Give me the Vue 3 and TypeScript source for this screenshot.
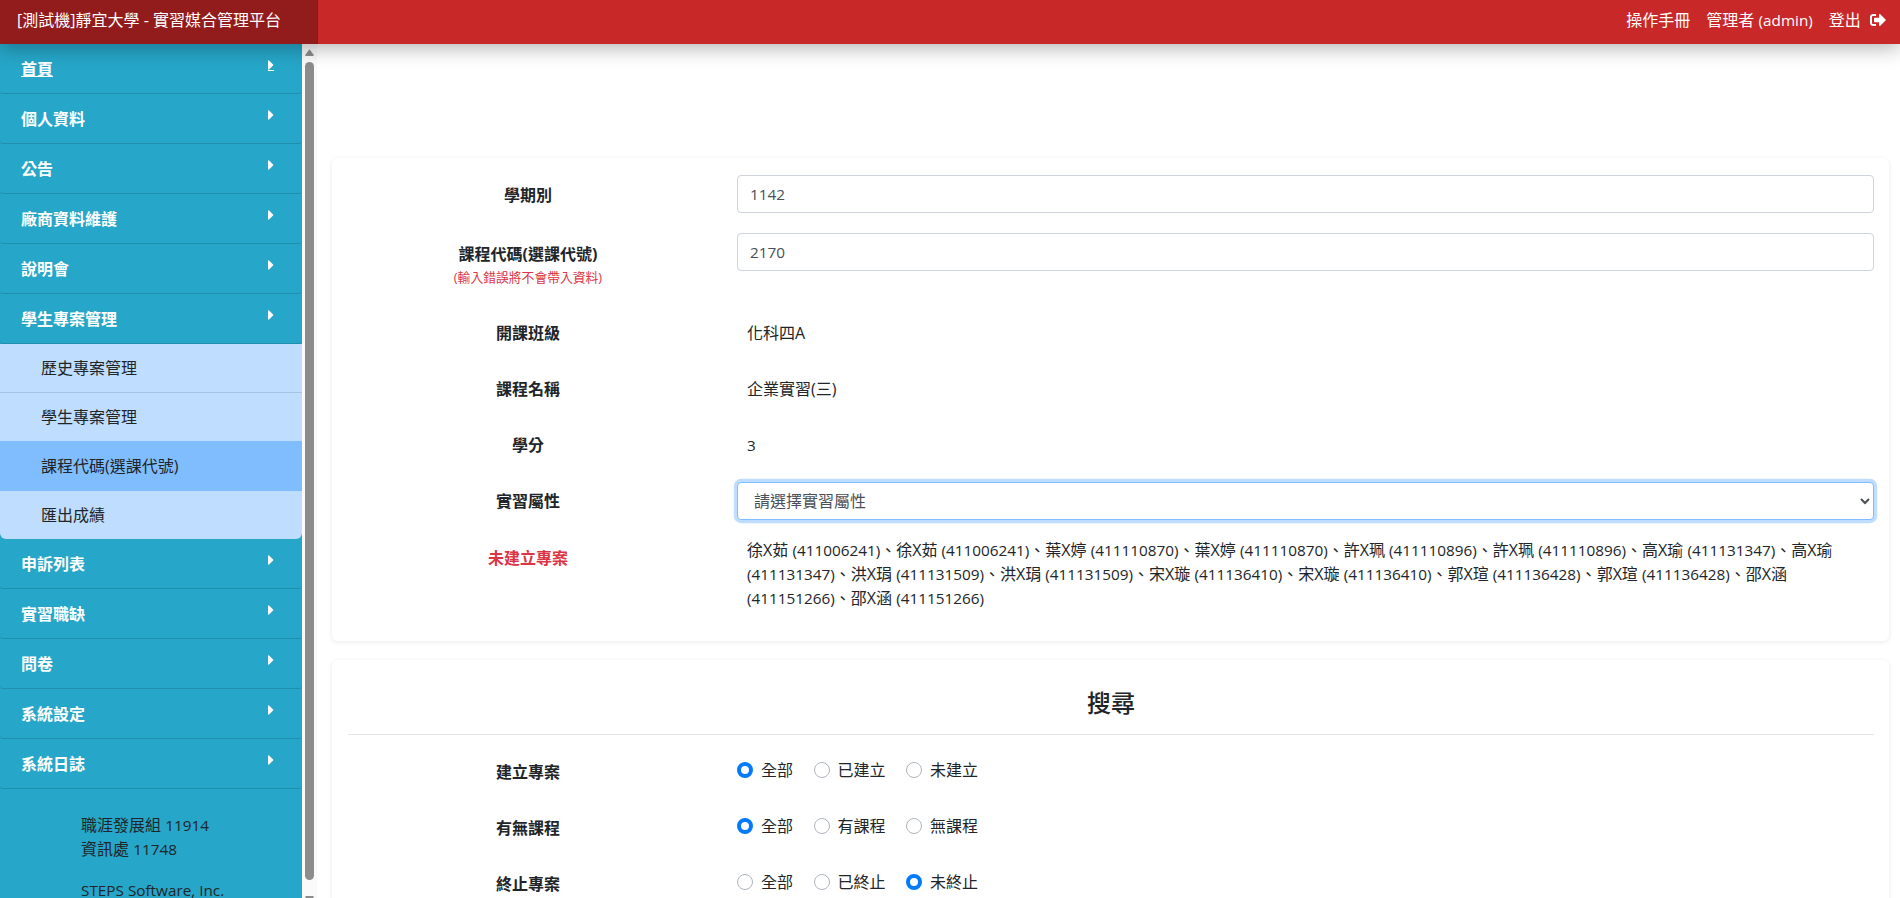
<script setup lang="ts">
import { ref } from "vue";

interface MenuItem {
  label: string;
  children?: string[];
}

interface Student {
  name: string;
  id: string;
}

interface RadioGroup {
  label: string;
  name: string;
  options: string[];
  value: string;
}

const menu: MenuItem[] = [
  { label: "首頁" },
  { label: "個人資料" },
  { label: "公告" },
  { label: "廠商資料維護" },
  { label: "說明會" },
  {
    label: "學生專案管理",
    children: ["歷史專案管理", "學生專案管理", "課程代碼(選課代號)", "匯出成績"],
  },
  { label: "申訴列表" },
  { label: "實習職缺" },
  { label: "問卷" },
  { label: "系統設定" },
  { label: "系統日誌" },
];

const activeChild = "課程代碼(選課代號)";

const baseStudents: Student[] = [
  { name: "徐X茹", id: "411006241" },
  { name: "葉X婷", id: "411110870" },
  { name: "許X珮", id: "411110896" },
  { name: "高X瑜", id: "411131347" },
  { name: "洪X琄", id: "411131509" },
  { name: "宋X璇", id: "411136410" },
  { name: "郭X瑄", id: "411136428" },
  { name: "邵X涵", id: "411151266" },
];
// 每位學生在資料裡都出現兩次
const students = baseStudents.flatMap((s) => [s, s]);

const term = ref("1142");
const courseCode = ref("2170");
const internType = ref("");

const radioGroups = ref<RadioGroup[]>([
  { label: "建立專案", name: "created", options: ["全部", "已建立", "未建立"], value: "全部" },
  { label: "有無課程", name: "course", options: ["全部", "有課程", "無課程"], value: "全部" },
  { label: "終止專案", name: "ended", options: ["全部", "已終止", "未終止"], value: "未終止" },
]);
</script>

<template>
  <div class="layout">
    <header class="topbar">
      <div class="brand">[測試機]靜宜大學 - 實習媒合管理平台</div>
      <nav class="top-links">
        <a>操作手冊</a>
        <a>管理者 <span class="num">(admin)</span></a>
        <a class="logout">
          登出
          <svg class="logout-icon" viewBox="0 0 512 512" aria-hidden="true">
            <path
              fill="currentColor"
              d="M497 273L329 441c-15 15-41 4.5-41-17v-96H152c-13.3 0-24-10.7-24-24v-96c0-13.3 10.7-24 24-24h136V88c0-21.4 25.9-32 41-17l168 168c9.3 9.4 9.3 24.6 0 34zM192 436v-40c0-6.6-5.4-12-12-12H96c-17.7 0-32-14.3-32-32V160c0-17.7 14.3-32 32-32h84c6.6 0 12-5.4 12-12V76c0-6.6-5.4-12-12-12H96c-53 0-96 43-96 96v192c0 53 43 96 96 96h84c6.6 0 12-5.4 12-12z"
            />
          </svg>
        </a>
      </nav>
    </header>

    <div class="body">
      <aside class="sidebar">
        <div class="side-scroll">
          <ul class="menu">
            <li v-for="(item, idx) in menu" :key="item.label">
              <a class="menu-item" :class="{ hovered: idx === 0 }">
                <span class="menu-label">{{ item.label }}</span>
                <span class="caret">
                  <svg viewBox="0 0 192 512" aria-hidden="true">
                    <path
                      fill="currentColor"
                      d="M0 384.662V127.338c0-17.818 21.543-26.741 34.142-14.142l128.662 128.662c7.81 7.81 7.81 20.474 0 28.284L34.142 398.804C21.543 411.404 0 402.48 0 384.662z"
                    />
                  </svg>
                </span>
              </a>
              <ul v-if="item.children" class="submenu">
                <li
                  v-for="child in item.children"
                  :key="child"
                  class="sub-item"
                  :class="{ active: child === activeChild }"
                >
                  {{ child }}
                </li>
              </ul>
            </li>
          </ul>
          <div class="side-footer">
            <p>職涯發展組 <span class="num">11914</span><br />資訊處 <span class="num">11748</span></p>
            <p class="num">STEPS Software, Inc.</p>
          </div>
        </div>
        <div class="scrollbar" aria-hidden="true">
          <svg class="scroll-arrow" viewBox="0 0 9 7"><path d="M4.5 0.3 L8.8 6 Q9 7 8 7 H1 Q0 7 0.2 6 Z" fill="#8c8c8c" /></svg>
          <div class="scroll-thumb"></div>
          <svg class="scroll-arrow down" viewBox="0 0 9 7"><path d="M4.5 6.7 L8.8 1 Q9 0 8 0 H1 Q0 0 0.2 1 Z" fill="#8c8c8c" /></svg>
        </div>
      </aside>

      <main class="content">
        <section class="card first-card">
          <div class="form-row">
            <label class="form-label term-label">學期別</label>
            <input v-model="term" class="control num" type="text" />
          </div>
          <div class="form-row code-row">
            <label class="form-label code-label">
              課程代碼(選課代號)
              <small class="hint">(輸入錯誤將不會帶入資料)</small>
            </label>
            <input v-model="courseCode" class="control num" type="text" />
          </div>
          <div class="form-row">
            <label class="form-label">開課班級</label>
            <div class="plain">化科四A</div>
          </div>
          <div class="form-row">
            <label class="form-label">課程名稱</label>
            <div class="plain">企業實習(三)</div>
          </div>
          <div class="form-row">
            <label class="form-label">學分</label>
            <div class="plain"><span class="num">3</span></div>
          </div>
          <div class="form-row">
            <label class="form-label">實習屬性</label>
            <select v-model="internType" class="control focused">
              <option value="">請選擇實習屬性</option>
            </select>
          </div>
          <div class="form-row last-row">
            <label class="form-label danger">未建立專案</label>
            <div class="plain students">
              <span v-for="(s, i) in students" :key="i">{{ s.name }} <span class="num">({{ s.id }})</span><template v-if="i < students.length - 1">、</template></span>
            </div>
          </div>
        </section>

        <section class="card search-card">
          <h2 class="search-title">搜尋</h2>
          <hr class="divider" />
          <div v-for="group in radioGroups" :key="group.name" class="form-row">
            <label class="form-label">{{ group.label }}</label>
            <div class="radios">
              <label v-for="opt in group.options" :key="opt" class="radio">
                <input v-model="group.value" type="radio" :name="group.name" :value="opt" />
                <span>{{ opt }}</span>
              </label>
            </div>
          </div>
        </section>
      </main>
    </div>
  </div>
</template>

<style>
html,
body {
  height: 100%;
  margin: 0;
  overflow: hidden;
  background: #fff;
}
</style>

<style scoped>
.layout {
  display: flex;
  flex-direction: column;
  height: 100vh;
  overflow: hidden;
  font-family: "Open Sans", "Noto Sans CJK TC", sans-serif;
  font-size: 16px;
  line-height: 24px;
  color: #212529;
}

.num {
  font-size: 15.3px;
}

/* top bar */
.topbar {
  position: relative;
  z-index: 2;
  display: flex;
  flex: none;
  align-items: center;
  justify-content: space-between;
  height: 44px;
  background: #c82828;
  color: #fff;
  box-shadow: 0 4px 20px rgba(0, 0, 0, 0.3);
}

.brand {
  width: 300px;
  height: 44px;
  padding-left: 17px;
  line-height: 40px;
  background: #921c1c;
  border-right: 1px solid #85191a;
  white-space: nowrap;
}

.top-links {
  display: flex;
  gap: 16px;
  padding-right: 14px;
  line-height: 40px;
  height: 44px;
}

.logout-icon {
  width: 16px;
  height: 16px;
  margin-left: 5px;
  vertical-align: -2px;
}

.body {
  display: flex;
  flex: 1;
  min-height: 0;
}

/* sidebar */
.sidebar {
  display: flex;
  flex: none;
  width: 317px;
  overflow: hidden;
}

.side-scroll {
  flex: none;
  width: 302px;
  overflow: hidden;
  background: #26a6c8;
}

.scrollbar {
  display: flex;
  flex: none;
  flex-direction: column;
  width: 15px;
  padding: 5px 0 0 3px;
  box-sizing: border-box;
  overflow: hidden;
  background: #fafafa;
}

.scroll-arrow {
  display: block;
  flex: none;
  width: 9px;
  height: 7px;
}

.scroll-arrow.down {
  margin-top: 16px;
}

.scroll-thumb {
  flex: none;
  width: 9px;
  height: 818px;
  margin-top: 6px;
  background: #8c8c8c;
  border-radius: 5px;
}

.menu,
.submenu {
  margin: 0;
  padding: 0;
  list-style: none;
}

.menu-item {
  display: flex;
  box-sizing: border-box;
  align-items: center;
  justify-content: space-between;
  height: 50px;
  padding: 0 28px 0 21px;
  border-bottom: 1px solid #1f8fad;
  border-radius: 0 0 3px 3px;
  color: #fff;
  font-weight: 700;
}

.hovered .menu-label {
  text-decoration: underline;
}

.caret {
  display: block;
  width: 6px;
  height: 16px;
  margin-top: -8px;
  color: #fff;
}

.caret svg {
  display: block;
  width: 6px;
  height: 16px;
}

.hovered .caret {
  height: 13px;
  margin-top: -10px;
  overflow: hidden;
  border-bottom: 1px solid #fff;
}

.submenu {
  overflow: hidden;
  background: #bfdeff;
  border-radius: 0 0 6px 6px;
}

.sub-item {
  display: flex;
  align-items: center;
  height: 48px;
  padding-left: 41px;
  color: #212529;
}

.sub-item:first-child {
  height: 48px;
  border-bottom: 1px solid #a5c4e2;
}

.sub-item.active {
  height: 50px;
  background: #80bdff;
}

.side-footer {
  padding: 24px 0 4px 81px;
}

.side-footer p {
  margin: 0 0 17px;
}

.side-footer p:last-child {
  margin-bottom: 0;
}

/* content */
.content {
  flex: 1;
  min-width: 0;
  padding: 114px 11px 0 15px;
  overflow: hidden;
}

.card {
  padding: 17px 15px 0 16px;
  background: #fff;
  border-radius: 6px;
  box-shadow: 0 1px 5px rgba(0, 0, 0, 0.09);
}

.first-card {
  height: 483px;
  box-sizing: border-box;
}

.search-card {
  margin-top: 19px;
  padding-top: 25px;
}

.form-row {
  display: grid;
  grid-template-columns: 360px 1fr;
  column-gap: 29px;
  min-height: 38px;
  margin-bottom: 18px;
}

.code-row {
  height: 63px;
  margin-top: 20px;
}

.last-row {
  margin-bottom: 0;
}

.form-label {
  padding-top: 7px;
  font-weight: 700;
  text-align: center;
}

.term-label {
  padding-top: 8px;
}

.code-label {
  padding-top: 9px;
}

.hint {
  display: block;
  margin-top: 1px;
  font-size: 12.8px;
  line-height: 20px;
  font-weight: 400;
  color: #dc3545;
}

.danger {
  padding-top: 8px;
  color: #dc3545;
}

.control {
  display: block;
  box-sizing: border-box;
  width: 100%;
  height: 38px;
  padding: 0 12px;
  background: #fff;
  border: 1px solid #ced4da;
  border-radius: 4px;
  color: #495057;
  font-family: inherit;
  outline: none;
}

select.control {
  font-size: 16px;
}

.focused {
  border-color: #80bdff;
  box-shadow: 0 0 0 3.2px rgba(0, 123, 255, 0.25);
}

.plain {
  padding: 7px 0 7px 10px;
}

.students {
  padding: 0 0 0 10px;
}

.search-title {
  margin: 0 0 13px;
  font-size: 24px;
  line-height: 36px;
  font-weight: 500;
  text-align: center;
}

.divider {
  margin: 0 0 18px;
  border: 0;
  border-top: 1px solid #e5e5e5;
}

.radios {
  display: flex;
  gap: 20.5px;
  padding-top: 2px;
}

.radio {
  display: flex;
  align-items: flex-start;
  gap: 8px;
  padding-top: 3px;
}

.radio input {
  flex: none;
  width: 16px;
  height: 16px;
  margin: 4px 0 0;
  appearance: none;
  background: #fff;
  border: 1px solid #adb5bd;
  border-radius: 50%;
}

.radio input:checked {
  background: #fff;
  border: 4.5px solid #007bff;
}
</style>
